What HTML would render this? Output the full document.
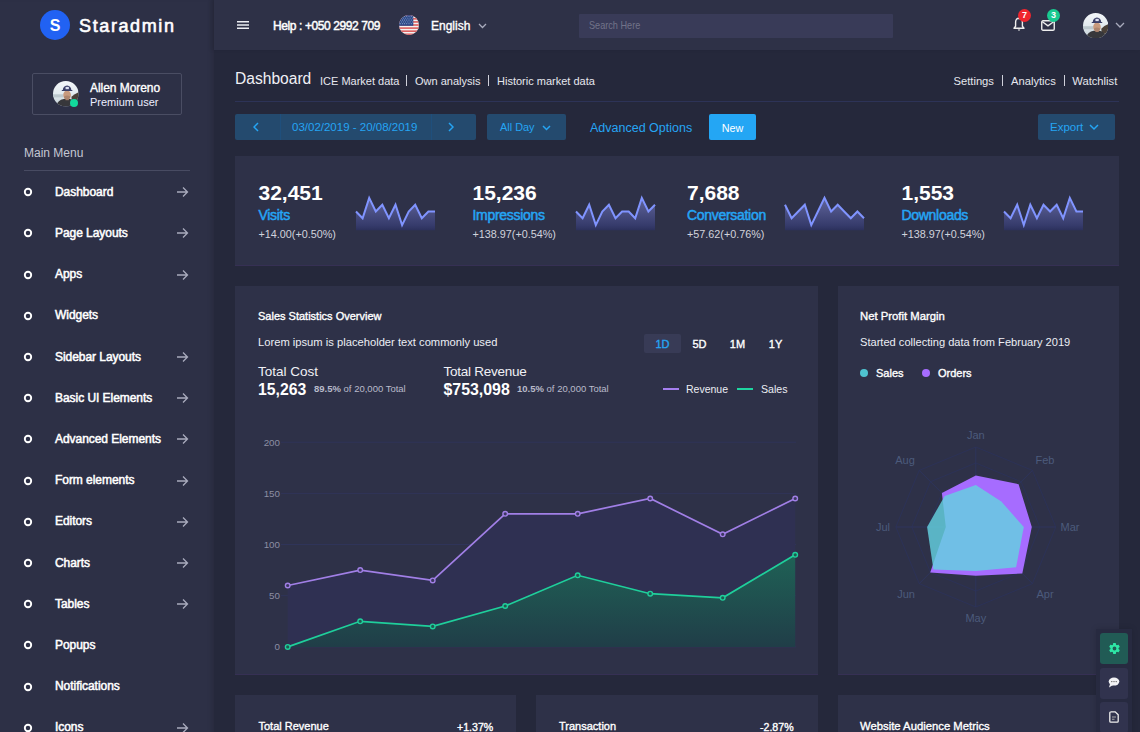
<!DOCTYPE html><html><head><meta charset="utf-8"><style>
*{box-sizing:border-box;margin:0;padding:0}
html,body{width:1140px;height:732px;overflow:hidden;background:#25283b;font-family:"Liberation Sans",sans-serif;color:#fff}
.a{position:absolute;white-space:nowrap;line-height:1}
#sidebar{position:absolute;left:0;top:0;width:214px;height:732px;background:#2d3046;box-shadow:inset -5px 0 5px -3px rgba(0,0,0,.12)}
#nav{position:absolute;left:214px;top:0;width:926px;height:50px;background:#2e3147;box-shadow:-3px 0 4px rgba(0,0,0,.08)}
.mc{position:absolute;left:23.8px;width:8.4px;height:8.4px;border:2px solid #fff;border-radius:50%}
.mt{position:absolute;left:55px;font-size:12px;font-weight:400;-webkit-text-stroke:0.5px #fff;letter-spacing:-0.05px;color:#fff;white-space:nowrap;line-height:1}
.card{position:absolute;background:#2e3148;box-shadow:inset 0 -1px 0 rgba(70,50,110,.35)}
.blue{color:#25a5f4}
.md{font-weight:400;-webkit-text-stroke:0.35px currentColor}
</style></head><body>
<div id="sidebar">
<div class="a" style="left:40px;top:10px;width:30px;height:30px;border-radius:50%;background:#2162f3"></div>
<div class="a" style="left:40px;top:17.5px;width:30px;text-align:center;font-size:16px;font-weight:700">S</div>
<div class="a" style="left:79px;top:16.5px;font-size:18px;font-weight:400;-webkit-text-stroke:0.6px #fff;letter-spacing:1.62px">Staradmin</div>
<div class="a" style="left:32px;top:73px;width:150px;height:42px;border:1px solid #4a4d63;border-radius:2px"></div>
<svg class="a" style="left:53px;top:81.3px" width="25.6" height="25.6" viewBox="0 0 100 100"><defs><clipPath id="av1"><circle cx="50" cy="50" r="50"/></clipPath><linearGradient id="avg1" x1="0" y1="0" x2="0" y2="1"><stop offset="0" stop-color="#f4f7fa"/><stop offset=".5" stop-color="#e2eaef"/><stop offset="1" stop-color="#c2ced4"/></linearGradient></defs><g clip-path="url(#av1)"><rect width="100" height="100" fill="url(#avg1)"/><rect x="0" y="52" width="40" height="12" fill="#bcc8ce"/><path d="M72 62 Q84 50 100 44 V82 H74Z" fill="#4a4038"/><path d="M10 100 Q18 74 42 70 H66 Q86 74 94 100Z" fill="#37373b"/><ellipse cx="55" cy="55" rx="15" ry="18" fill="#c89a7e"/><ellipse cx="55" cy="64" rx="12" ry="7" fill="#8e6c5c" opacity=".45"/><rect x="49" y="70" width="13" height="5" fill="#a8806a"/><path d="M38 38 Q39 19 55 18 Q71 19 72 38Z" fill="#3b3f68"/><rect x="34" y="35" width="42" height="4" rx="2" fill="#3b3f68"/><rect x="49" y="23" width="13" height="9" fill="#dcdff0"/></g></svg>
<div class="a" style="left:70.3px;top:98.9px;width:8.2px;height:8.2px;border-radius:50%;background:#12d99c"></div>
<div class="a" style="left:90px;top:82px;font-size:12px;font-weight:400;-webkit-text-stroke:0.35px #fff;letter-spacing:-0.05px">Allen Moreno</div>
<div class="a" style="left:90px;top:97.3px;font-size:11px;color:#eef">Premium user</div>
<div class="a" style="left:24px;top:147px;font-size:12px;color:#c5c7d3">Main Menu</div>
<div class="a" style="left:24px;top:170px;width:166px;height:1px;background:#484b62"></div>
<svg class="a" style="left:22px;top:186.20px" width="12" height="12"><circle cx="6" cy="6" r="3.2" fill="none" stroke="#fff" stroke-width="1.9"/></svg>
<div class="mt" style="top:185.7px">Dashboard</div>
<svg class="a" style="left:176px;top:186.2px" width="13" height="12" viewBox="0 0 13 12"><path d="M1 6H11.5M7 1.5L11.5 6L7 10.5" fill="none" stroke="#a9abbd" stroke-width="1.3"/></svg>
<svg class="a" style="left:22px;top:227.40px" width="12" height="12"><circle cx="6" cy="6" r="3.2" fill="none" stroke="#fff" stroke-width="1.9"/></svg>
<div class="mt" style="top:226.9px">Page Layouts</div>
<svg class="a" style="left:176px;top:227.4px" width="13" height="12" viewBox="0 0 13 12"><path d="M1 6H11.5M7 1.5L11.5 6L7 10.5" fill="none" stroke="#a9abbd" stroke-width="1.3"/></svg>
<svg class="a" style="left:22px;top:268.60px" width="12" height="12"><circle cx="6" cy="6" r="3.2" fill="none" stroke="#fff" stroke-width="1.9"/></svg>
<div class="mt" style="top:268.1px">Apps</div>
<svg class="a" style="left:176px;top:268.6px" width="13" height="12" viewBox="0 0 13 12"><path d="M1 6H11.5M7 1.5L11.5 6L7 10.5" fill="none" stroke="#a9abbd" stroke-width="1.3"/></svg>
<svg class="a" style="left:22px;top:309.80px" width="12" height="12"><circle cx="6" cy="6" r="3.2" fill="none" stroke="#fff" stroke-width="1.9"/></svg>
<div class="mt" style="top:309.3px">Widgets</div>
<svg class="a" style="left:22px;top:351.00px" width="12" height="12"><circle cx="6" cy="6" r="3.2" fill="none" stroke="#fff" stroke-width="1.9"/></svg>
<div class="mt" style="top:350.5px">Sidebar Layouts</div>
<svg class="a" style="left:176px;top:351.0px" width="13" height="12" viewBox="0 0 13 12"><path d="M1 6H11.5M7 1.5L11.5 6L7 10.5" fill="none" stroke="#a9abbd" stroke-width="1.3"/></svg>
<svg class="a" style="left:22px;top:392.20px" width="12" height="12"><circle cx="6" cy="6" r="3.2" fill="none" stroke="#fff" stroke-width="1.9"/></svg>
<div class="mt" style="top:391.7px">Basic UI Elements</div>
<svg class="a" style="left:176px;top:392.2px" width="13" height="12" viewBox="0 0 13 12"><path d="M1 6H11.5M7 1.5L11.5 6L7 10.5" fill="none" stroke="#a9abbd" stroke-width="1.3"/></svg>
<svg class="a" style="left:22px;top:433.40px" width="12" height="12"><circle cx="6" cy="6" r="3.2" fill="none" stroke="#fff" stroke-width="1.9"/></svg>
<div class="mt" style="top:432.9px">Advanced Elements</div>
<svg class="a" style="left:176px;top:433.4px" width="13" height="12" viewBox="0 0 13 12"><path d="M1 6H11.5M7 1.5L11.5 6L7 10.5" fill="none" stroke="#a9abbd" stroke-width="1.3"/></svg>
<svg class="a" style="left:22px;top:474.60px" width="12" height="12"><circle cx="6" cy="6" r="3.2" fill="none" stroke="#fff" stroke-width="1.9"/></svg>
<div class="mt" style="top:474.1px">Form elements</div>
<svg class="a" style="left:176px;top:474.6px" width="13" height="12" viewBox="0 0 13 12"><path d="M1 6H11.5M7 1.5L11.5 6L7 10.5" fill="none" stroke="#a9abbd" stroke-width="1.3"/></svg>
<svg class="a" style="left:22px;top:515.80px" width="12" height="12"><circle cx="6" cy="6" r="3.2" fill="none" stroke="#fff" stroke-width="1.9"/></svg>
<div class="mt" style="top:515.3px">Editors</div>
<svg class="a" style="left:176px;top:515.8px" width="13" height="12" viewBox="0 0 13 12"><path d="M1 6H11.5M7 1.5L11.5 6L7 10.5" fill="none" stroke="#a9abbd" stroke-width="1.3"/></svg>
<svg class="a" style="left:22px;top:557.00px" width="12" height="12"><circle cx="6" cy="6" r="3.2" fill="none" stroke="#fff" stroke-width="1.9"/></svg>
<div class="mt" style="top:556.5px">Charts</div>
<svg class="a" style="left:176px;top:557.0px" width="13" height="12" viewBox="0 0 13 12"><path d="M1 6H11.5M7 1.5L11.5 6L7 10.5" fill="none" stroke="#a9abbd" stroke-width="1.3"/></svg>
<svg class="a" style="left:22px;top:598.20px" width="12" height="12"><circle cx="6" cy="6" r="3.2" fill="none" stroke="#fff" stroke-width="1.9"/></svg>
<div class="mt" style="top:597.7px">Tables</div>
<svg class="a" style="left:176px;top:598.2px" width="13" height="12" viewBox="0 0 13 12"><path d="M1 6H11.5M7 1.5L11.5 6L7 10.5" fill="none" stroke="#a9abbd" stroke-width="1.3"/></svg>
<svg class="a" style="left:22px;top:639.40px" width="12" height="12"><circle cx="6" cy="6" r="3.2" fill="none" stroke="#fff" stroke-width="1.9"/></svg>
<div class="mt" style="top:638.9px">Popups</div>
<svg class="a" style="left:22px;top:680.60px" width="12" height="12"><circle cx="6" cy="6" r="3.2" fill="none" stroke="#fff" stroke-width="1.9"/></svg>
<div class="mt" style="top:680.1px">Notifications</div>
<svg class="a" style="left:22px;top:721.80px" width="12" height="12"><circle cx="6" cy="6" r="3.2" fill="none" stroke="#fff" stroke-width="1.9"/></svg>
<div class="mt" style="top:721.3px">Icons</div>
<svg class="a" style="left:176px;top:721.8px" width="13" height="12" viewBox="0 0 13 12"><path d="M1 6H11.5M7 1.5L11.5 6L7 10.5" fill="none" stroke="#a9abbd" stroke-width="1.3"/></svg>
</div>
<div id="nav"></div>
<svg class="a" style="left:237px;top:20px" width="12" height="10"><path d="M0 1.7H12M0 5H12M0 8.3H12" stroke="#eceef3" stroke-width="1.5"/></svg>
<div class="a" style="left:273px;top:20px;font-size:12px;font-weight:400;-webkit-text-stroke:0.45px #fff;letter-spacing:-0.4px">Help : +050 2992 709</div>
<svg class="a" style="left:399px;top:15px" width="20" height="20" viewBox="0 0 20 20"><defs><clipPath id="fc"><circle cx="10" cy="10" r="10"/></clipPath></defs><g clip-path="url(#fc)"><rect width="20" height="20" fill="#f2f2f2"/><rect y="0.00" width="20" height="1.54" fill="#dc5858"/><rect y="3.08" width="20" height="1.54" fill="#dc5858"/><rect y="6.16" width="20" height="1.54" fill="#dc5858"/><rect y="9.24" width="20" height="1.54" fill="#dc5858"/><rect y="12.32" width="20" height="1.54" fill="#dc5858"/><rect y="15.40" width="20" height="1.54" fill="#dc5858"/><rect y="18.48" width="20" height="1.54" fill="#dc5858"/><rect width="14.3" height="10.8" fill="#2d4a8a"/><circle cx="1.2" cy="1.2" r=".45" fill="#dfe6f5"/><circle cx="3.4" cy="1.2" r=".45" fill="#dfe6f5"/><circle cx="5.6" cy="1.2" r=".45" fill="#dfe6f5"/><circle cx="7.8" cy="1.2" r=".45" fill="#dfe6f5"/><circle cx="10.0" cy="1.2" r=".45" fill="#dfe6f5"/><circle cx="12.2" cy="1.2" r=".45" fill="#dfe6f5"/><circle cx="2.3" cy="3.1" r=".45" fill="#dfe6f5"/><circle cx="4.5" cy="3.1" r=".45" fill="#dfe6f5"/><circle cx="6.7" cy="3.1" r=".45" fill="#dfe6f5"/><circle cx="8.9" cy="3.1" r=".45" fill="#dfe6f5"/><circle cx="11.1" cy="3.1" r=".45" fill="#dfe6f5"/><circle cx="13.3" cy="3.1" r=".45" fill="#dfe6f5"/><circle cx="1.2" cy="5.0" r=".45" fill="#dfe6f5"/><circle cx="3.4" cy="5.0" r=".45" fill="#dfe6f5"/><circle cx="5.6" cy="5.0" r=".45" fill="#dfe6f5"/><circle cx="7.8" cy="5.0" r=".45" fill="#dfe6f5"/><circle cx="10.0" cy="5.0" r=".45" fill="#dfe6f5"/><circle cx="12.2" cy="5.0" r=".45" fill="#dfe6f5"/><circle cx="2.3" cy="6.9" r=".45" fill="#dfe6f5"/><circle cx="4.5" cy="6.9" r=".45" fill="#dfe6f5"/><circle cx="6.7" cy="6.9" r=".45" fill="#dfe6f5"/><circle cx="8.9" cy="6.9" r=".45" fill="#dfe6f5"/><circle cx="11.1" cy="6.9" r=".45" fill="#dfe6f5"/><circle cx="13.3" cy="6.9" r=".45" fill="#dfe6f5"/><circle cx="1.2" cy="8.8" r=".45" fill="#dfe6f5"/><circle cx="3.4" cy="8.8" r=".45" fill="#dfe6f5"/><circle cx="5.6" cy="8.8" r=".45" fill="#dfe6f5"/><circle cx="7.8" cy="8.8" r=".45" fill="#dfe6f5"/><circle cx="10.0" cy="8.8" r=".45" fill="#dfe6f5"/><circle cx="12.2" cy="8.8" r=".45" fill="#dfe6f5"/></g></svg>
<div class="a" style="left:431px;top:20px;font-size:12px;font-weight:400;-webkit-text-stroke:0.35px #fff;letter-spacing:0px">English</div>
<svg class="a" style="left:478px;top:22.5px" width="9" height="6"><path d="M1 1L4.5 4.5L8 1" fill="none" stroke="#a9abbd" stroke-width="1.3"/></svg>
<div class="a" style="left:578.5px;top:13.5px;width:314.5px;height:24px;background:#393b58;border-radius:1px"></div>
<div class="a" style="left:588.5px;top:20px;font-size:11px;color:#727389;transform:scaleX(0.83);transform-origin:0 0">Search Here</div>
<svg class="a" style="left:1012.5px;top:17px" width="12" height="15" viewBox="0 0 12 15"><path d="M6 1.2C3.7 1.2 2.6 3 2.6 5.3V9.3L1 11.2H11L9.4 9.3V5.3C9.4 3 8.3 1.2 6 1.2Z" fill="none" stroke="#eee" stroke-width="1.4" stroke-linejoin="round"/><path d="M4.6 12.4H7.4L6 14Z" fill="#eee"/></svg>
<div class="a" style="left:1018px;top:9.3px;width:13px;height:13px;border-radius:50%;background:#f0262e;font-size:9px;font-weight:700;text-align:center;line-height:13px">7</div>
<svg class="a" style="left:1040.5px;top:19.5px" width="14" height="11" viewBox="0 0 14 11"><rect x="0.75" y="0.75" width="12.5" height="9.5" rx="1.3" fill="none" stroke="#eee" stroke-width="1.4"/><path d="M1.4 1.8L7 5.8L12.6 1.8" fill="none" stroke="#eee" stroke-width="1.4"/></svg>
<div class="a" style="left:1047px;top:9.3px;width:13px;height:13px;border-radius:50%;background:#19c990;font-size:9px;font-weight:700;text-align:center;line-height:13px">3</div>
<svg class="a" style="left:1083px;top:12.6px" width="25.4" height="25.4" viewBox="0 0 100 100"><defs><clipPath id="av2"><circle cx="50" cy="50" r="50"/></clipPath><linearGradient id="avg2" x1="0" y1="0" x2="0" y2="1"><stop offset="0" stop-color="#f4f7fa"/><stop offset=".5" stop-color="#e2eaef"/><stop offset="1" stop-color="#c2ced4"/></linearGradient></defs><g clip-path="url(#av2)"><rect width="100" height="100" fill="url(#avg2)"/><rect x="0" y="52" width="40" height="12" fill="#bcc8ce"/><path d="M72 62 Q84 50 100 44 V82 H74Z" fill="#4a4038"/><path d="M10 100 Q18 74 42 70 H66 Q86 74 94 100Z" fill="#37373b"/><ellipse cx="55" cy="55" rx="15" ry="18" fill="#c89a7e"/><ellipse cx="55" cy="64" rx="12" ry="7" fill="#8e6c5c" opacity=".45"/><rect x="49" y="70" width="13" height="5" fill="#a8806a"/><path d="M38 38 Q39 19 55 18 Q71 19 72 38Z" fill="#3b3f68"/><rect x="34" y="35" width="42" height="4" rx="2" fill="#3b3f68"/><rect x="49" y="23" width="13" height="9" fill="#dcdff0"/></g></svg>
<svg class="a" style="left:1115px;top:22px" width="10" height="7"><path d="M1 1L5 5L9 1" fill="none" stroke="#a9abbd" stroke-width="1.3"/></svg>
<div class="a" style="left:235px;top:71px;font-size:15.6px;color:#f0f0f5">Dashboard</div>
<div class="a" style="left:320px;top:75.7px;font-size:11px;color:#e6e7ee">ICE Market data</div>
<div class="a" style="left:405.5px;top:75px;width:1px;height:11px;background:#cfd0da"></div>
<div class="a" style="left:415px;top:75.7px;font-size:11px;color:#e6e7ee">Own analysis</div>
<div class="a" style="left:487.5px;top:75px;width:1px;height:11px;background:#cfd0da"></div>
<div class="a" style="left:497px;top:75.7px;font-size:11px;color:#e6e7ee">Historic market data</div>
<div class="a" style="left:953.5px;top:75.7px;font-size:11.2px;color:#e6e7ee">Settings</div>
<div class="a" style="left:1002px;top:75px;width:1px;height:11px;background:#cfd0da"></div>
<div class="a" style="left:1011px;top:75.7px;font-size:11.2px;color:#e6e7ee">Analytics</div>
<div class="a" style="left:1064px;top:75px;width:1px;height:11px;background:#cfd0da"></div>
<div class="a" style="left:1072.3px;top:75.7px;font-size:11.2px;color:#e6e7ee">Watchlist</div>
<div class="a" style="left:235px;top:101px;width:884px;height:1px;background:#2d3357"></div>
<div class="a" style="left:235px;top:114px;width:241px;height:26px;background:#244a6e;border-radius:2px"></div>
<div class="a" style="left:279.5px;top:114px;width:1px;height:26px;background:#1f4f7c"></div>
<div class="a" style="left:431px;top:114px;width:1px;height:26px;background:#1f4f7c"></div>
<svg class="a" style="left:253px;top:122px" width="6" height="10"><path d="M5 1L1 5L5 9" fill="none" stroke="#25a5f4" stroke-width="1.5"/></svg>
<svg class="a" style="left:448px;top:122px" width="6" height="10"><path d="M1 1L5 5L1 9" fill="none" stroke="#25a5f4" stroke-width="1.5"/></svg>
<div class="a blue" style="left:292px;top:122px;font-size:11.5px">03/02/2019 - 20/08/2019</div>
<div class="a" style="left:487px;top:114px;width:79px;height:26px;background:#244a6e;border-radius:2px"></div>
<div class="a blue" style="left:500px;top:122px;font-size:10.9px">All Day</div>
<svg class="a" style="left:542px;top:124.5px" width="9" height="6"><path d="M1 1L4.5 4.5L8 1" fill="none" stroke="#25a5f4" stroke-width="1.5"/></svg>
<div class="a blue" style="left:590px;top:121.5px;font-size:12.5px">Advanced Options</div>
<div class="a" style="left:709px;top:114px;width:47px;height:26px;background:#24a6f4;border-radius:2px"></div>
<div class="a" style="left:709px;top:122.5px;width:47px;text-align:center;font-size:10.8px">New</div>
<div class="a" style="left:1038px;top:114px;width:77px;height:26px;background:#244a6e;border-radius:2px"></div>
<div class="a blue" style="left:1050px;top:122px;font-size:11.5px">Export</div>
<svg class="a" style="left:1089px;top:124px" width="10" height="7"><path d="M1 1L5 5L9 1" fill="none" stroke="#25a5f4" stroke-width="1.5"/></svg>
<div class="card" style="left:235px;top:156px;width:884px;height:110px"></div>
<div class="a" style="left:258.5px;top:182px;font-size:21px;font-weight:700">32,451</div>
<div class="a blue" style="left:258.5px;top:207.5px;font-size:14px;letter-spacing:-0.3px;-webkit-text-stroke:0.5px #25a5f4">Visits</div>
<div class="a" style="left:258.5px;top:228.5px;font-size:10.8px;color:#d2d3dc">+14.00(+0.50%)</div>
<svg class="a" style="left:355.5px;top:190px;overflow:visible" width="79" height="41"><defs><linearGradient id="sg0" x1="0" y1="0" x2="0" y2="1"><stop offset="0" stop-color="#8a90e0" stop-opacity=".55"/><stop offset=".85" stop-color="#3c4388" stop-opacity=".55"/><stop offset="1" stop-color="#2a3068" stop-opacity=".6"/></linearGradient></defs><path d="M0.0 21.5 L6.6 28.3 L13.2 7.9 L19.8 21.5 L26.3 14.7 L32.9 28.3 L39.5 14.7 L46.1 35.1 L52.7 21.5 L59.2 14.7 L65.8 28.3 L72.4 21.5 L79.0 21.5 L79 40.3 L0 40.3Z" fill="url(#sg0)"/><path d="M0.0 21.5 L6.6 28.3 L13.2 7.9 L19.8 21.5 L26.3 14.7 L32.9 28.3 L39.5 14.7 L46.1 35.1 L52.7 21.5 L59.2 14.7 L65.8 28.3 L72.4 21.5 L79.0 21.5" fill="none" stroke="#8094ff" stroke-width="2" stroke-linejoin="miter"/></svg>
<div class="a" style="left:472.5px;top:182px;font-size:21px;font-weight:700">15,236</div>
<div class="a blue" style="left:472.5px;top:207.5px;font-size:14px;letter-spacing:-0.3px;-webkit-text-stroke:0.5px #25a5f4">Impressions</div>
<div class="a" style="left:472.5px;top:228.5px;font-size:10.8px;color:#d2d3dc">+138.97(+0.54%)</div>
<svg class="a" style="left:575.9px;top:190px;overflow:visible" width="79" height="41"><defs><linearGradient id="sg1" x1="0" y1="0" x2="0" y2="1"><stop offset="0" stop-color="#8a90e0" stop-opacity=".55"/><stop offset=".85" stop-color="#3c4388" stop-opacity=".55"/><stop offset="1" stop-color="#2a3068" stop-opacity=".6"/></linearGradient></defs><path d="M0.0 21.5 L6.6 28.3 L13.2 14.7 L19.8 35.1 L26.3 21.5 L32.9 14.7 L39.5 28.3 L46.1 21.5 L52.7 21.5 L59.2 28.3 L65.8 7.9 L72.4 21.5 L79.0 14.7 L79 40.3 L0 40.3Z" fill="url(#sg1)"/><path d="M0.0 21.5 L6.6 28.3 L13.2 14.7 L19.8 35.1 L26.3 21.5 L32.9 14.7 L39.5 28.3 L46.1 21.5 L52.7 21.5 L59.2 28.3 L65.8 7.9 L72.4 21.5 L79.0 14.7" fill="none" stroke="#8094ff" stroke-width="2" stroke-linejoin="miter"/></svg>
<div class="a" style="left:687px;top:182px;font-size:21px;font-weight:700">7,688</div>
<div class="a blue" style="left:687px;top:207.5px;font-size:14px;letter-spacing:-0.3px;-webkit-text-stroke:0.5px #25a5f4">Conversation</div>
<div class="a" style="left:687px;top:228.5px;font-size:10.8px;color:#d2d3dc">+57.62(+0.76%)</div>
<svg class="a" style="left:785.4px;top:190px;overflow:visible" width="79" height="41"><defs><linearGradient id="sg2" x1="0" y1="0" x2="0" y2="1"><stop offset="0" stop-color="#8a90e0" stop-opacity=".55"/><stop offset=".85" stop-color="#3c4388" stop-opacity=".55"/><stop offset="1" stop-color="#2a3068" stop-opacity=".6"/></linearGradient></defs><path d="M0.0 14.7 L6.6 28.3 L13.2 21.5 L19.8 14.7 L26.3 35.1 L32.9 21.5 L39.5 7.9 L46.1 21.5 L52.7 14.7 L59.2 21.5 L65.8 28.3 L72.4 21.5 L79.0 28.3 L79 40.3 L0 40.3Z" fill="url(#sg2)"/><path d="M0.0 14.7 L6.6 28.3 L13.2 21.5 L19.8 14.7 L26.3 35.1 L32.9 21.5 L39.5 7.9 L46.1 21.5 L52.7 14.7 L59.2 21.5 L65.8 28.3 L72.4 21.5 L79.0 28.3" fill="none" stroke="#8094ff" stroke-width="2" stroke-linejoin="miter"/></svg>
<div class="a" style="left:901.5px;top:182px;font-size:21px;font-weight:700">1,553</div>
<div class="a blue" style="left:901.5px;top:207.5px;font-size:14px;letter-spacing:-0.3px;-webkit-text-stroke:0.5px #25a5f4">Downloads</div>
<div class="a" style="left:901.5px;top:228.5px;font-size:10.8px;color:#d2d3dc">+138.97(+0.54%)</div>
<svg class="a" style="left:1003.9px;top:190px;overflow:visible" width="79" height="41"><defs><linearGradient id="sg3" x1="0" y1="0" x2="0" y2="1"><stop offset="0" stop-color="#8a90e0" stop-opacity=".55"/><stop offset=".85" stop-color="#3c4388" stop-opacity=".55"/><stop offset="1" stop-color="#2a3068" stop-opacity=".6"/></linearGradient></defs><path d="M0.0 21.5 L6.6 28.3 L13.2 14.7 L19.8 35.1 L26.3 14.7 L32.9 28.3 L39.5 14.7 L46.1 21.5 L52.7 14.7 L59.2 28.3 L65.8 7.9 L72.4 21.5 L79.0 21.5 L79 40.3 L0 40.3Z" fill="url(#sg3)"/><path d="M0.0 21.5 L6.6 28.3 L13.2 14.7 L19.8 35.1 L26.3 14.7 L32.9 28.3 L39.5 14.7 L46.1 21.5 L52.7 14.7 L59.2 28.3 L65.8 7.9 L72.4 21.5 L79.0 21.5" fill="none" stroke="#8094ff" stroke-width="2" stroke-linejoin="miter"/></svg>
<div class="card" style="left:235px;top:286px;width:583px;height:389px"></div>
<div class="a md" style="left:258px;top:311px;font-size:11px">Sales Statistics Overview</div>
<div class="a" style="left:258px;top:337px;font-size:11.2px;color:#eceef4">Lorem ipsum is placeholder text commonly used</div>
<div class="a" style="left:643.7px;top:334px;width:37.3px;height:19px;background:#383b56;border-radius:2px"></div>
<div class="a blue" style="left:644px;top:339px;width:37px;text-align:center;font-size:11px;font-weight:400;-webkit-text-stroke:0.35px currentColor">1D</div>
<div class="a" style="left:681px;top:339px;width:37px;text-align:center;font-size:11px;font-weight:400;-webkit-text-stroke:0.35px currentColor">5D</div>
<div class="a" style="left:719px;top:339px;width:37px;text-align:center;font-size:11px;font-weight:400;-webkit-text-stroke:0.35px currentColor">1M</div>
<div class="a" style="left:757px;top:339px;width:37px;text-align:center;font-size:11px;font-weight:400;-webkit-text-stroke:0.35px currentColor">1Y</div>
<div class="a" style="left:258px;top:364.5px;font-size:13.5px;color:#f0f0f5">Total Cost</div>
<div class="a" style="left:258px;top:382px;font-size:15.8px;font-weight:700">15,263</div>
<div class="a" style="left:314px;top:384px;font-size:9.5px;color:#b9bbca"><b>89.5%</b> of 20,000 Total</div>
<div class="a" style="left:443.5px;top:364.5px;font-size:13.5px;letter-spacing:-0.25px;color:#f0f0f5">Total Revenue</div>
<div class="a" style="left:443.5px;top:382px;font-size:15.9px;font-weight:700">$753,098</div>
<div class="a" style="left:517px;top:384px;font-size:9.5px;color:#b9bbca"><b>10.5%</b> of 20,000 Total</div>
<div class="a" style="left:663px;top:388px;width:16px;height:2px;background:#a57ff0"></div>
<div class="a" style="left:686px;top:383.5px;font-size:10.5px;color:#eceef4">Revenue</div>
<div class="a" style="left:737px;top:388px;width:16px;height:2px;background:#1ed5a0"></div>
<div class="a" style="left:761px;top:383.5px;font-size:10.6px;color:#eceef4">Sales</div>
<svg class="a" style="left:0;top:0" width="1140" height="732"><defs><linearGradient id="gr" x1="0" y1="0" x2="0" y2="1" gradientUnits="userSpaceOnUse" x1="0" y1="498" x2="0" y2="646"><stop offset="0" stop-color="#433c70"/><stop offset=".6" stop-color="#35325e"/><stop offset="1" stop-color="#2f3052"/></linearGradient><linearGradient id="gs" gradientUnits="userSpaceOnUse" x1="0" y1="554" x2="0" y2="646"><stop offset="0" stop-color="#1f6256"/><stop offset="1" stop-color="#203e48"/></linearGradient></defs><line x1="281" y1="646.9" x2="796" y2="646.9" stroke="#2f3459" stroke-width="1"/><line x1="281" y1="595.7" x2="796" y2="595.7" stroke="#2f3459" stroke-width="1"/><line x1="281" y1="544.5" x2="796" y2="544.5" stroke="#2f3459" stroke-width="1"/><line x1="281" y1="493.4" x2="796" y2="493.4" stroke="#2f3459" stroke-width="1"/><line x1="281" y1="442.2" x2="796" y2="442.2" stroke="#2f3459" stroke-width="1"/><path d="M287.7 585.5 L360.2 570.1 L432.7 580.4 L505.2 513.8 L577.7 513.8 L650.2 498.5 L722.7 534.3 L795.2 498.5 L795.2 646.9 L287.7 646.9Z" fill="url(#gr)"/><path d="M287.7 646.9 L360.2 621.3 L432.7 626.4 L505.2 606.0 L577.7 575.3 L650.2 593.7 L722.7 597.8 L795.2 554.8 L795.2 646.9 L287.7 646.9Z" fill="url(#gs)"/><path d="M287.7 585.5 L360.2 570.1 L432.7 580.4 L505.2 513.8 L577.7 513.8 L650.2 498.5 L722.7 534.3 L795.2 498.5" fill="none" stroke="#a17fe6" stroke-width="1.7"/><path d="M287.7 646.9 L360.2 621.3 L432.7 626.4 L505.2 606.0 L577.7 575.3 L650.2 593.7 L722.7 597.8 L795.2 554.8" fill="none" stroke="#1fcf9b" stroke-width="1.7"/><circle cx="287.7" cy="585.5" r="2.3" fill="#3b3760" stroke="#a17fe6" stroke-width="1.4"/><circle cx="360.2" cy="570.1" r="2.3" fill="#3b3760" stroke="#a17fe6" stroke-width="1.4"/><circle cx="432.7" cy="580.4" r="2.3" fill="#3b3760" stroke="#a17fe6" stroke-width="1.4"/><circle cx="505.2" cy="513.8" r="2.3" fill="#3b3760" stroke="#a17fe6" stroke-width="1.4"/><circle cx="577.7" cy="513.8" r="2.3" fill="#3b3760" stroke="#a17fe6" stroke-width="1.4"/><circle cx="650.2" cy="498.5" r="2.3" fill="#3b3760" stroke="#a17fe6" stroke-width="1.4"/><circle cx="722.7" cy="534.3" r="2.3" fill="#3b3760" stroke="#a17fe6" stroke-width="1.4"/><circle cx="795.2" cy="498.5" r="2.3" fill="#3b3760" stroke="#a17fe6" stroke-width="1.4"/><circle cx="287.7" cy="646.9" r="2.3" fill="#1f5a52" stroke="#1fcf9b" stroke-width="1.4"/><circle cx="360.2" cy="621.3" r="2.3" fill="#1f5a52" stroke="#1fcf9b" stroke-width="1.4"/><circle cx="432.7" cy="626.4" r="2.3" fill="#1f5a52" stroke="#1fcf9b" stroke-width="1.4"/><circle cx="505.2" cy="606.0" r="2.3" fill="#1f5a52" stroke="#1fcf9b" stroke-width="1.4"/><circle cx="577.7" cy="575.3" r="2.3" fill="#1f5a52" stroke="#1fcf9b" stroke-width="1.4"/><circle cx="650.2" cy="593.7" r="2.3" fill="#1f5a52" stroke="#1fcf9b" stroke-width="1.4"/><circle cx="722.7" cy="597.8" r="2.3" fill="#1f5a52" stroke="#1fcf9b" stroke-width="1.4"/><circle cx="795.2" cy="554.8" r="2.3" fill="#1f5a52" stroke="#1fcf9b" stroke-width="1.4"/></svg>
<div class="a" style="left:240px;width:40px;text-align:right;top:642.3px;font-size:9.8px;color:#8c8ea3">0</div>
<div class="a" style="left:240px;width:40px;text-align:right;top:591.1px;font-size:9.8px;color:#8c8ea3">50</div>
<div class="a" style="left:240px;width:40px;text-align:right;top:539.9px;font-size:9.8px;color:#8c8ea3">100</div>
<div class="a" style="left:240px;width:40px;text-align:right;top:488.8px;font-size:9.8px;color:#8c8ea3">150</div>
<div class="a" style="left:240px;width:40px;text-align:right;top:437.6px;font-size:9.8px;color:#8c8ea3">200</div>
<div class="card" style="left:837.5px;top:286px;width:281.5px;height:389px"></div>
<div class="a md" style="left:860px;top:311px;font-size:11.3px">Net Profit Margin</div>
<div class="a" style="left:860px;top:337px;font-size:11.1px;color:#eceef4">Started collecting data from February 2019</div>
<div class="a" style="left:860px;top:369px;width:8px;height:8px;border-radius:50%;background:#4fc3d0"></div>
<div class="a md" style="left:876px;top:368px;font-size:11px">Sales</div>
<div class="a" style="left:922px;top:369px;width:8px;height:8px;border-radius:50%;background:#a66cff"></div>
<div class="a md" style="left:938px;top:368px;font-size:11px">Orders</div>
<svg class="a" style="left:0;top:0" width="1140" height="732"><polygon points="975.8,511.0 987.1,515.7 991.8,527.0 987.1,538.3 975.8,543.0 964.5,538.3 959.8,527.0 964.5,515.7" fill="none" stroke="#2c3257" stroke-width="1"/><polygon points="975.8,495.0 998.4,504.4 1007.8,527.0 998.4,549.6 975.8,559.0 953.2,549.6 943.8,527.0 953.2,504.4" fill="none" stroke="#2c3257" stroke-width="1"/><polygon points="975.8,479.0 1009.7,493.1 1023.8,527.0 1009.7,560.9 975.8,575.0 941.9,560.9 927.8,527.0 941.9,493.1" fill="none" stroke="#2c3257" stroke-width="1"/><polygon points="975.8,463.0 1021.1,481.7 1039.8,527.0 1021.1,572.3 975.8,591.0 930.5,572.3 911.8,527.0 930.5,481.7" fill="none" stroke="#2c3257" stroke-width="1"/><polygon points="975.8,447.0 1032.4,470.4 1055.8,527.0 1032.4,583.6 975.8,607.0 919.2,583.6 895.8,527.0 919.2,470.4" fill="none" stroke="#2c3257" stroke-width="1"/><line x1="975.8" y1="527" x2="975.8" y2="447.0" stroke="#2e355c" stroke-width="1"/><line x1="975.8" y1="527" x2="1032.4" y2="470.4" stroke="#2e355c" stroke-width="1"/><line x1="975.8" y1="527" x2="1055.8" y2="527.0" stroke="#2e355c" stroke-width="1"/><line x1="975.8" y1="527" x2="1032.4" y2="583.6" stroke="#2e355c" stroke-width="1"/><line x1="975.8" y1="527" x2="975.8" y2="607.0" stroke="#2e355c" stroke-width="1"/><line x1="975.8" y1="527" x2="919.2" y2="583.6" stroke="#2e355c" stroke-width="1"/><line x1="975.8" y1="527" x2="895.8" y2="527.0" stroke="#2e355c" stroke-width="1"/><line x1="975.8" y1="527" x2="919.2" y2="470.4" stroke="#2e355c" stroke-width="1"/><polygon points="975.8,475.4 1018.6,484.2 1031.8,527.0 1022.3,573.5 975.8,575.7 930.2,572.6 945.8,527.0 941.9,493.1" fill="#a66cff"/><polygon points="975.8,485.0 1001.3,501.5 1023.8,527.0 1016.1,567.3 975.8,571.0 933.4,569.4 927.1,527.0 944.7,495.9" fill="rgba(100,210,225,0.82)"/></svg>
<div class="a" style="left:955.8px;width:40px;text-align:center;top:430.2px;font-size:11px;color:#4c5b7c">Jan</div>
<div class="a" style="left:1025.0px;width:40px;text-align:center;top:455.2px;font-size:11px;color:#4c5b7c">Feb</div>
<div class="a" style="left:1050.0px;width:40px;text-align:center;top:522.2px;font-size:11px;color:#4c5b7c">Mar</div>
<div class="a" style="left:1025.0px;width:40px;text-align:center;top:589.2px;font-size:11px;color:#4c5b7c">Apr</div>
<div class="a" style="left:955.8px;width:40px;text-align:center;top:613.2px;font-size:11px;color:#4c5b7c">May</div>
<div class="a" style="left:886.0px;width:40px;text-align:center;top:589.2px;font-size:11px;color:#4c5b7c">Jun</div>
<div class="a" style="left:863.0px;width:40px;text-align:center;top:522.2px;font-size:11px;color:#4c5b7c">Jul</div>
<div class="a" style="left:885.0px;width:40px;text-align:center;top:455.2px;font-size:11px;color:#4c5b7c">Aug</div>
<div class="card" style="left:235px;top:694.8px;width:281px;height:60px"></div>
<div class="card" style="left:535.7px;top:694.8px;width:282.3px;height:60px"></div>
<div class="card" style="left:837.5px;top:694.8px;width:281.5px;height:60px"></div>
<div class="a md" style="left:258.5px;top:721px;font-size:11px">Total Revenue</div>
<div class="a md" style="left:457px;top:722px;font-size:10.6px">+1.37%</div>
<div class="a md" style="left:559px;top:721px;font-size:11px">Transaction</div>
<div class="a md" style="left:760px;top:722px;font-size:10.6px">-2.87%</div>
<div class="a md" style="left:860px;top:721px;font-size:11.3px">Website Audience Metrics</div>
<div class="a" style="left:1096px;top:629px;width:36px;height:110px;background:#272a40;box-shadow:0 0 6px rgba(0,0,0,.15)"></div>
<div class="a" style="left:1100px;top:633px;width:28px;height:31px;background:#215b55;border-radius:3px"></div>
<svg class="a" style="left:1107.6px;top:642.2px" width="13" height="13" viewBox="0 0 24 24"><path fill="#2ee6a6" d="M19.4 13c.04-.32.06-.66.06-1s-.02-.68-.07-1l2.11-1.65c.19-.15.24-.42.12-.64l-2-3.46c-.12-.22-.39-.3-.61-.22l-2.49 1c-.52-.4-1.08-.73-1.69-.98l-.38-2.65A.49.49 0 0 0 14 2h-4c-.25 0-.46.18-.49.42l-.38 2.65c-.61.25-1.17.59-1.69.98l-2.49-1a.5.5 0 0 0-.61.22l-2 3.46c-.13.22-.07.49.12.64L4.57 11c-.04.32-.07.66-.07 1s.03.68.07 1l-2.11 1.65c-.19.15-.24.42-.12.64l2 3.46c.12.22.39.3.61.22l2.49-1c.52.4 1.08.73 1.69.98l.38 2.65c.03.24.24.42.49.42h4c.25 0 .46-.18.49-.42l.38-2.65c.61-.25 1.17-.59 1.69-.98l2.49 1c.23.09.49 0 .61-.22l2-3.46c.12-.22.07-.49-.12-.64L19.4 13zM12 15.5a3.5 3.5 0 1 1 0-7 3.5 3.5 0 0 1 0 7z"/></svg>
<div class="a" style="left:1100px;top:668px;width:28px;height:30.5px;background:#31334e;border-radius:3px"></div>
<svg class="a" style="left:1108px;top:677px" width="12" height="11" viewBox="0 0 12 11"><ellipse cx="6" cy="4.6" rx="5.3" ry="4" fill="#f2f2f5"/><path d="M2 7L1 10.5L5 8Z" fill="#f2f2f5"/><circle cx="3.8" cy="4.6" r=".7" fill="#555"/><circle cx="6" cy="4.6" r=".7" fill="#555"/><circle cx="8.2" cy="4.6" r=".7" fill="#555"/></svg>
<div class="a" style="left:1100px;top:702px;width:28px;height:31px;background:#31334e;border-radius:3px"></div>
<svg class="a" style="left:1109px;top:711px" width="10" height="12" viewBox="0 0 10 12"><path d="M1.5 0.8H6.2L9.2 3.8V10.2Q9.2 11.2 8.2 11.2H1.8Q0.8 11.2 0.8 10.2V1.8Q0.8 0.8 1.8 0.8Z" fill="none" stroke="#eee" stroke-width="1.3"/><path d="M3 6H7M3 8.3H5.5" stroke="#aaa" stroke-width="1.1"/></svg>
</body></html>
